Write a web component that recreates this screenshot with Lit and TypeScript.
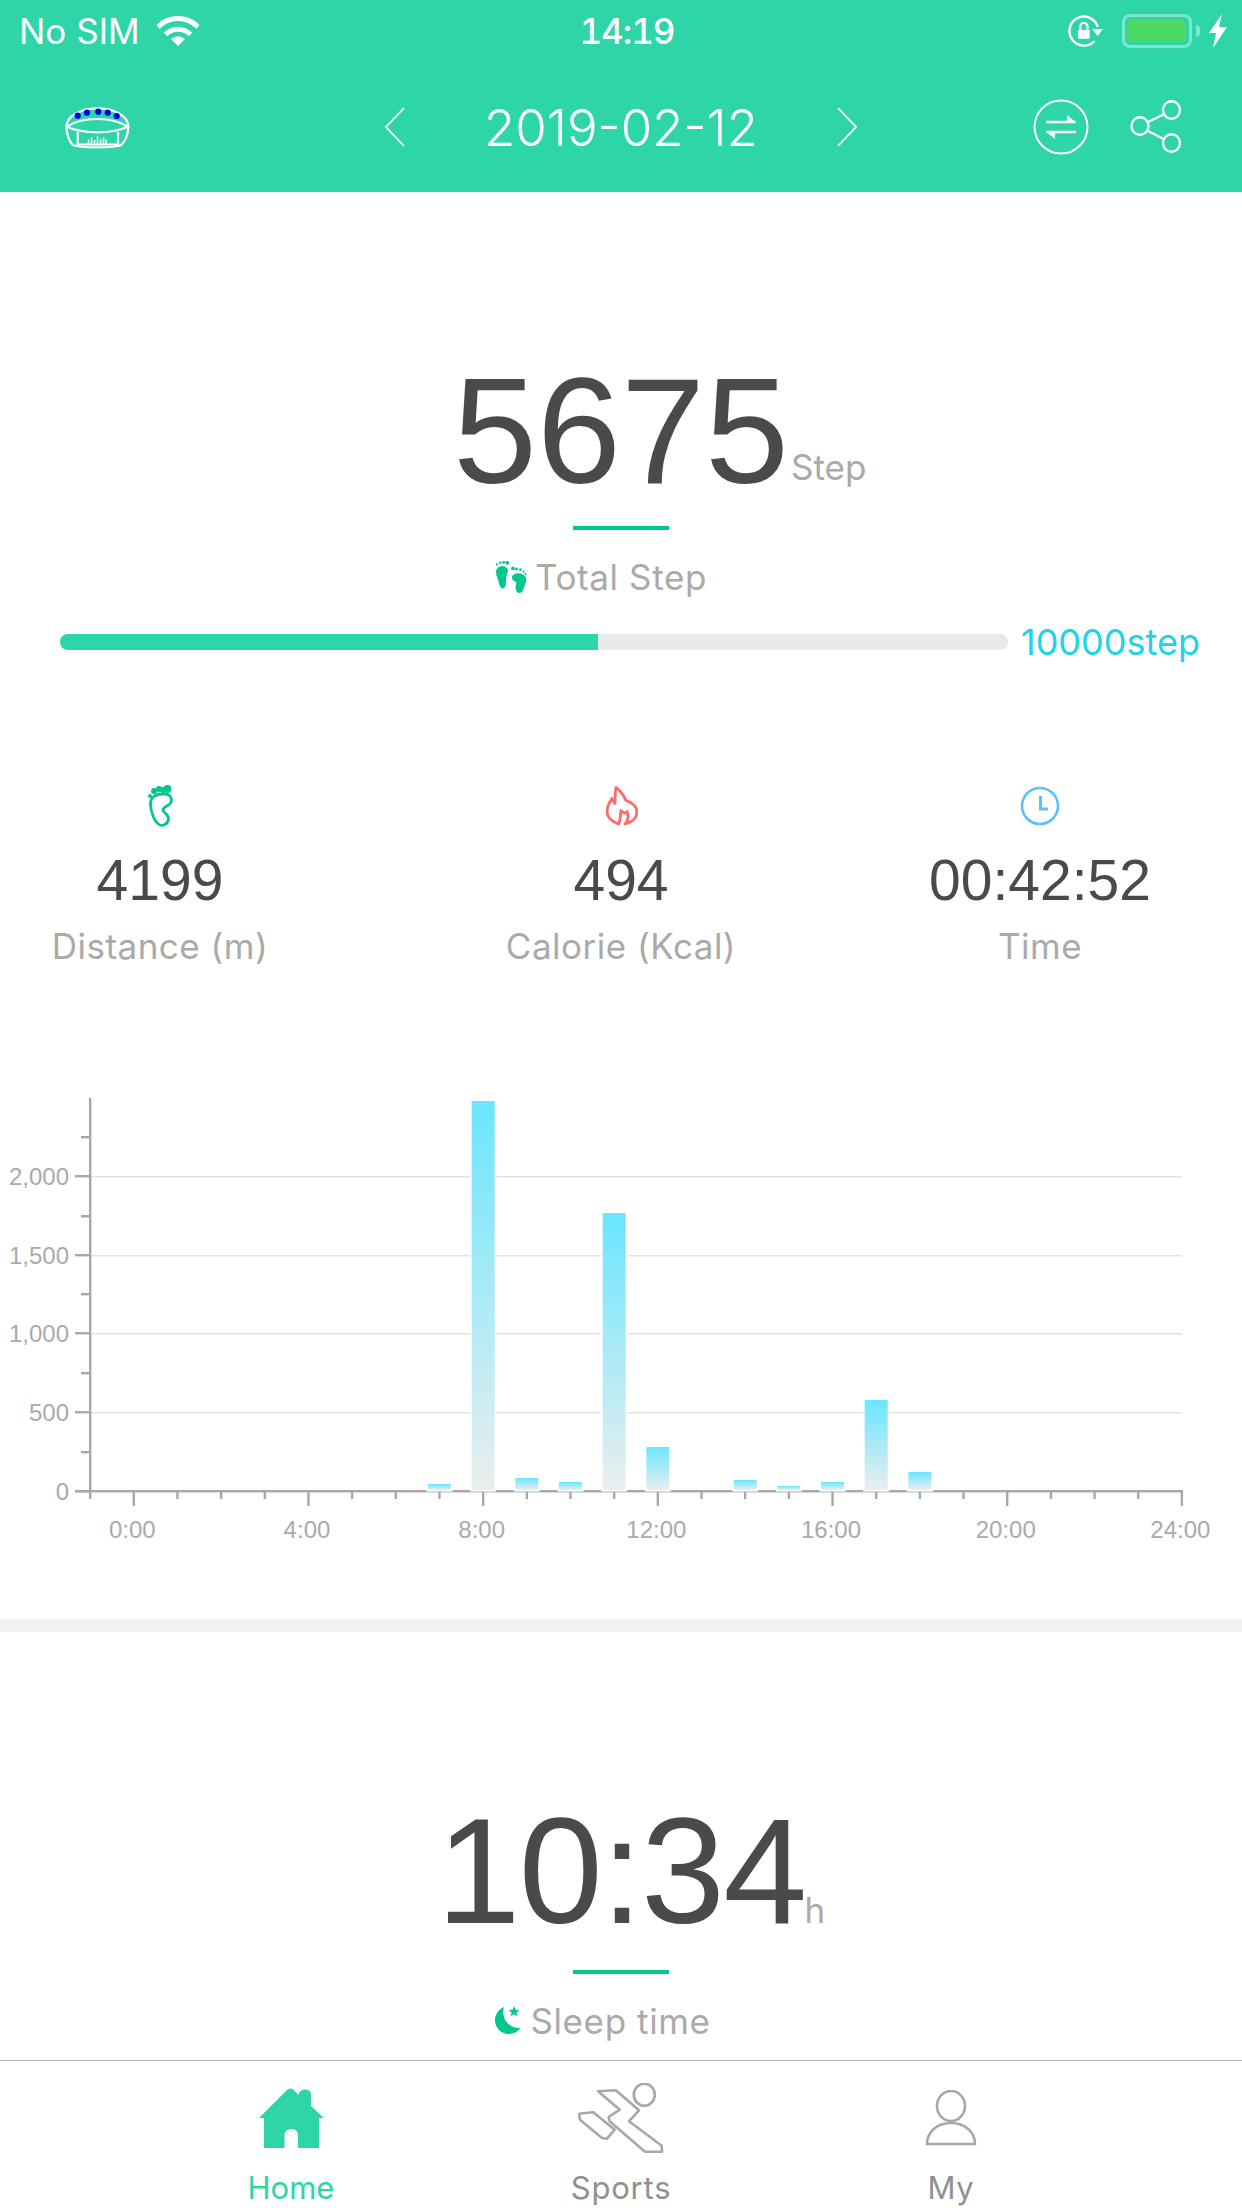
import { css, html, svg, LitElement } from 'lit'
import { customElement } from 'lit/decorators.js'

// hourly step counts, drawn as [hour, top y on the page]
const BARS = [
  [7, 1484], [8, 1101], [9, 1478], [10, 1482], [11, 1213], [12, 1447],
  [14, 1480], [15, 1486], [16, 1482], [17, 1400], [18, 1472],
]
const GRID = [
  [1176, '2,000'], [1255, '1,500'], [1333, '1,000'], [1412, '500'], [1491, '0'],
]
const Y_MINOR = [1137, 1216, 1294, 1373, 1452]
const hourX = (h: number) => 133.8 + h * 43.67

const chevron = (d: string) => html`<svg width="24" height="40" viewBox="0 0 24 40">
  <path d=${d} fill="none" stroke="#fff" stroke-width="1.8" /></svg>`

@customElement('app-root')
export class AppRoot extends LitElement {
  renderChart() {
    const hours = Array.from({ length: 25 }, (_, i) => i)
    return html`<svg class="chart" width="1242" height="460" viewBox="0 1090 1242 460">
      <defs>
        <linearGradient id="bar" x1="0" y1="0" x2="0" y2="1">
          <stop offset="0" stop-color="#6ae6ff" />
          <stop offset="1" stop-color="#eaeeee" />
        </linearGradient>
      </defs>
      ${GRID.slice(0, 4).map(([y]) => svg`<rect x="91" y=${y as number} width="1091" height="1.5" fill="#e3e3e3" />`)}
      <rect x="89" y="1098" width="2.4" height="394" fill="#a8a8a8" />
      <rect x="75" y="1490" width="1108" height="2.4" fill="#a8a8a8" />
      ${GRID.map(([y, t]) => svg`
        <rect x="75" y=${(y as number) - 1} width="15" height="2.4" fill="#a8a8a8" />
        <text x="69" y=${(y as number) + 8.5} text-anchor="end" class="tick">${t}</text>`)}
      ${Y_MINOR.map((y) => svg`<rect x="81" y=${y - 1} width="9" height="2.4" fill="#a8a8a8" />`)}
      <rect x="89" y="1491" width="2.4" height="8" fill="#a8a8a8" />
      ${hours.map((h) => {
        const major = h % 4 === 0
        return svg`<rect x=${hourX(h) - 1.2} y="1491" width="2.4" height=${major ? 15 : 8} fill="#a8a8a8" />
          ${major ? svg`<text x=${hourX(h) - 1.5} y="1537.5" text-anchor="middle" class="tick">${h}:00</text>` : ''}`
      })}
      ${BARS.map(([h, top]) => svg`<rect x=${hourX(h) - 11.5} y=${top} width="23" height=${1490 - top}
        fill="url(#bar)" stroke="#fff" stroke-width="3" paint-order="stroke" />`)}
    </svg>`
  }

  renderFeet() {
    return html`<svg width="31" height="33" viewBox="0 0 31 33" fill="#00c78c">
      <path d="M0 11 C0 5 8 3 11 7 C13.5 10 10 14 10 18 C10 22 10.5 27 7 27.5 C3 27.5 3 20 1.5 17 C0.5 15 0 13 0 11Z" />
      <path d="M16 17 C15.5 13 22 11 26 13 C30 15 31 18 30 21 C29 24 28 26 27 29 C26 33 21 33 20 29 C19 25 21 23 20 21 C19 20 16.5 20 16 17Z" />
      <circle cx="1" cy="3.4" r="1.1" /><circle cx="4.3" cy="1.8" r="1.3" /><circle cx="7.7" cy="1.4" r="1.4" />
      <circle cx="11.3" cy="1.8" r="1.9" />
      <circle cx="17" cy="7.4" r="1.9" /><circle cx="20.6" cy="8" r="1.4" /><circle cx="24.4" cy="8.6" r="1.3" />
      <circle cx="27.6" cy="10.6" r="1.1" /><circle cx="29.4" cy="13" r="1" />
    </svg>`
  }

  renderHero(value: string, unit: string, icon: unknown, label: string, mod = '') {
    return html`
      <div class="hero ${mod}">
        <span></span>
        <span class="hero_value">${value}</span>
        <span class="hero_unit">${unit}</span>
      </div>
      <div class="hero_rule ${mod}"></div>
      <div class="hero_label">${icon}<span>${label}</span></div>
    `
  }

  render() {
    return html`
      <header class="top">
        <div class="status">
          <div class="status_left">
            <span>No SIM</span>
            <svg width="42" height="30" viewBox="0 0 42 30">
              <path d="M1 11 A28 28 0 0 1 41 11" fill="none" stroke="#fff" stroke-width="5" />
              <path d="M8.5 18.5 A17.5 17.5 0 0 1 33.5 18.5" fill="none" stroke="#fff" stroke-width="5" />
              <path d="M21 30 L14 23 A10 10 0 0 1 28 23Z" fill="#fff" />
            </svg>
          </div>
          <span class="status_time">14:19</span>
          <div class="status_right">
            <svg width="36" height="32" viewBox="0 0 36 32">
              <path d="M29.8 12 A14.5 14.5 0 1 0 26.5 26" fill="none" stroke="#fff" stroke-width="2.4" />
              <path d="M24 14 H35 L29.7 21Z" fill="#fff" />
              <rect x="10" y="15" width="11.7" height="8.7" rx="1" fill="#fff" />
              <path d="M12.3 15 V11.5 A3.6 3.6 0 0 1 19.5 11.5 V15" fill="none" stroke="#fff" stroke-width="2.2" />
            </svg>
            <div class="battery"><div class="battery_fill"></div></div>
            <div class="battery_nub"></div>
            <svg width="18" height="34" viewBox="0 0 18 34">
              <path d="M13 0 L0 19 H7 L4 34 L18 13 H10Z" fill="#fff" />
            </svg>
          </div>
        </div>
        <nav class="nav">
          <svg width="65" height="43" viewBox="0 0 65 43" fill="none" stroke="#fff" stroke-width="2.2">
            <path d="M1.5 20.7 C1.5 10 16 2.3 32.5 2.3 C49 2.3 63.3 10 63.3 20.7 C63.3 28 60 37 55 39.5 C46 42 18 42 9 39.5 C4.5 37 1.5 28 1.5 20.7Z" />
            <path d="M2 20.7 C10 15 22 13 33 13 C44 13 54 15 63 20.7 C54 24.5 44 26.3 33 26.3 C22 26.3 10 24.5 2 20.7Z" />
            <path d="M12.7 26 V38.5 H53 V26" />
            <path d="M23.5 38 V33.5 M26.5 38 V31.5 M29.5 38 V34 M32.5 38 V30 M35.5 38 V33.5 M38.5 38 V31.5 M41 38 V33.5" stroke-width="1.5" />
            <g fill="#0000e6" stroke="none">
              <circle cx="12.7" cy="9.7" r="3.1" /><circle cx="22" cy="6.7" r="3.1" /><circle cx="33.3" cy="5.7" r="3.1" />
              <circle cx="42.7" cy="6.7" r="3.1" /><circle cx="51.7" cy="10" r="3.1" />
            </g>
          </svg>
          <div class="nav_date">
            ${chevron('M21 1 L3 20 L21 39')}
            <span>2019-02-12</span>
            ${chevron('M3 1 L21 20 L3 39')}
          </div>
          <div class="nav_actions">
            <svg width="56" height="56" viewBox="0 0 56 56" fill="none" stroke="#fff" stroke-width="2">
              <circle cx="28" cy="28" r="26.5" />
              <path d="M13 23 H42.5 M13.5 33 H43" stroke-width="2.6" />
              <path d="M34 16 L42.5 23 H34Z M13.5 33 H22 V40Z" fill="#fff" stroke="none" />
            </svg>
            <svg width="52" height="54" viewBox="0 0 52 54" fill="none" stroke="#fff" stroke-width="2.4">
              <ellipse cx="41.5" cy="10" rx="8.5" ry="8.8" />
              <ellipse cx="10" cy="26" rx="8.5" ry="8.8" />
              <ellipse cx="41.5" cy="43" rx="8.5" ry="8.8" />
              <path d="M18 22 L33.5 14.5 M18 31 L33.5 39" />
            </svg>
          </div>
        </nav>
      </header>

      <main class="main">
        ${this.renderHero('5675', 'Step', this.renderFeet(), 'Total Step')}

        <div class="goal">
          <div class="goal_track"><div class="goal_fill" style="width:${(5675 / 10000) * 100 - 0.05}%"></div></div>
          <span class="goal_text">10000step</span>
        </div>

        <section class="stats">
          <div class="stat">
            <svg width="26" height="42" viewBox="0 0 26 42">
              <path d="M3.5 20 C3 12 9 9 15 9 C22 8 25.5 12 24 17 C23 21 16 21 16 25 C16 28 22 29 21.5 34 C21 39 16 41 13 40 C8 38 4 28 3.5 20Z" fill="none" stroke="#00c78c" stroke-width="2.8" />
              <g fill="#00c78c">
                <circle cx="3" cy="11" r="2" /><circle cx="7" cy="6" r="3" /><circle cx="12" cy="4" r="3" />
                <circle cx="16" cy="5" r="3" /><circle cx="20.5" cy="4" r="4" />
              </g>
            </svg>
            <div class="stat_value">4199</div>
            <div class="stat_label">Distance (m)</div>
          </div>
          <div class="stat">
            <svg width="33" height="39" viewBox="0 0 33 39" fill="none" stroke="#ff6b6b" stroke-width="2.8" stroke-linejoin="round">
              <path d="M11 1 C17 5 19 10 21 14 C27 16 32 20 32 26 C32 32 26 36 20 37.5 C23 34 24 29 22 25 C20 28 18 26 16 24 C15 28 16 33 13.5 37.5 C7 35 2 31 2 25 C2 20 5 15 7 12 C8 15 9 16 10 17 C10 12 10 6 11 1Z" />
            </svg>
            <div class="stat_value">494</div>
            <div class="stat_label">Calorie (Kcal)</div>
          </div>
          <div class="stat">
            <svg width="40" height="40" viewBox="0 0 40 40" fill="none" stroke="#5bc0ff" stroke-width="2.6">
              <circle cx="20" cy="20" r="18" />
              <path d="M20.5 10 V23 H28" stroke-width="3" />
            </svg>
            <div class="stat_value">00:42:52</div>
            <div class="stat_label">Time</div>
          </div>
        </section>

        ${this.renderChart()}

        <div class="divider"></div>

        ${this.renderHero('10:34', 'h', html`<svg width="30" height="30" viewBox="0 0 30 30" fill="#00c78c">
          <path d="M12 1 A14 14 0 1 0 28.5 22 A16 16 0 0 1 12 1Z" />
          <path d="M22 0 L23.5 3.7 L27.5 3.9 L24.4 6.4 L25.4 10.2 L22 8.1 L18.6 10.2 L19.6 6.4 L16.5 3.9 L20.5 3.7Z" />
        </svg>`, 'Sleep time', 'sleep')}
      </main>

      <footer class="tabs">
        <div class="tab tab--on">
          <div class="tab_icon">
            <svg width="65" height="60" viewBox="0 0 65 60" fill="#2ed5a9">
              <path d="M0 30 L28 2 Q31.5 -1 35 2 L39.5 7 C40 0 51.5 0 52 6 V18 L65 30 H60 V60 H39 V47 C39 39 25.5 39 25.5 47 V60 H5 V30Z" />
            </svg>
          </div>
          <span>Home</span>
        </div>
        <div class="tab">
          <div class="tab_icon">
            <svg width="86" height="70" viewBox="0 0 86 70" fill="none" stroke="#a8a8a8" stroke-width="2.6" stroke-linejoin="round">
              <ellipse cx="66.3" cy="11.7" rx="10.5" ry="11" />
              <path d="M20 8.3 L37.8 7.3 L61 27.3 L51 38.3 L83.7 62.7 L84 68.7 L67 68.7 L31.6 38.3 L30.6 34 L41.8 26.7Z" />
              <path d="M1 30.7 L15.3 29.3 L36.7 46.7 L29 55.7 L24 55 L2 36.7Z" />
            </svg>
          </div>
          <span>Sports</span>
        </div>
        <div class="tab">
          <div class="tab_icon">
            <svg width="52" height="56" viewBox="0 0 52 56" fill="none" stroke="#a8a8a8" stroke-width="2.6">
              <ellipse cx="26" cy="16" rx="14" ry="15" />
              <path d="M2 54 C2 42 12 33 26 33 C40 33 50 42 50 54Z" />
            </svg>
          </div>
          <span>My</span>
        </div>
      </footer>
    `
  }

  static styles = css`
    :host {
      display: flex;
      flex-direction: column;
      height: 2208px;
      width: 1242px;
      overflow: hidden;
      background: #fff;
      font-family: Inter, 'Liberation Sans', sans-serif;
    }
    svg {
      display: block;
      flex: none;
    }

    .top {
      background: #2ed5a9;
      color: #fff;
      height: 192px;
      flex: none;
    }
    .status {
      display: grid;
      grid-template-columns: 1fr auto 1fr;
      align-items: center;
      height: 62px;
      padding: 0 15px 0 19px;
      font-size: 35px;
    }
    .status_left {
      display: flex;
      align-items: center;
      gap: 17px;
    }
    .status_time {
      font-weight: 500;
      font-feature-settings: 'tnum';
      letter-spacing: -1px;
      margin-left: 8px;
    }
    .status_right {
      display: flex;
      align-items: center;
      justify-content: flex-end;
    }
    .battery {
      box-sizing: border-box;
      width: 70px;
      height: 34px;
      margin-left: 18px;
      padding: 3px;
      border: 3px solid rgba(255, 255, 255, 0.38);
      border-radius: 8px;
    }
    .battery_fill {
      height: 100%;
      background: #4cd964;
      border-radius: 4px;
    }
    .battery_nub {
      width: 4px;
      height: 12px;
      margin: 0 9px 0 4px;
      background: rgba(255, 255, 255, 0.38);
      border-radius: 0 4px 4px 0;
    }
    .nav {
      display: grid;
      grid-template-columns: 1fr auto 1fr;
      align-items: center;
      height: 130px;
      padding: 0 60px 0 65px;
    }
    .nav_date {
      display: flex;
      align-items: center;
      gap: 77px;
      margin-right: 5px;
      font-size: 51px;
      font-weight: 300;
    }
    .nav_actions {
      display: flex;
      justify-content: flex-end;
      align-items: center;
      gap: 41px;
    }

    .main {
      flex: 1;
      min-height: 0;
      overflow: hidden;
    }
    .hero {
      display: grid;
      grid-template-columns: 1fr auto 1fr;
      align-items: end;
      padding-top: 163px;
      color: #4a4a4a;
    }
    .hero_value {
      font-family: 'Liberation Sans', sans-serif;
      font-size: 151px;
      line-height: 1;
    }
    .hero.sleep .hero_value {
      letter-spacing: -1.8px;
    }
    .hero_unit {
      margin: 0 0 21px 2px;
      font-size: 35px;
      line-height: 1;
      color: #aaa;
    }
    .hero.sleep .hero_unit {
      margin: 0 0 18px -1px;
    }
    .hero_rule {
      width: 96px;
      height: 4px;
      margin: 20px auto 0;
      background: #00c78c;
    }
    .hero_rule.sleep {
      margin-top: 24px;
    }
    .hero_label {
      display: flex;
      justify-content: center;
      align-items: center;
      gap: 8px;
      height: 40px;
      margin-top: 27px;
      padding-right: 39px;
      font-size: 35px;
      letter-spacing: 0.6px;
      color: #aaa;
    }

    .goal {
      display: flex;
      align-items: center;
      gap: 13px;
      height: 44px;
      margin-top: 23px;
      padding-left: 60px;
    }
    .goal_track {
      width: 948px;
      height: 16px;
      background: #e9e9e9;
      border-radius: 8px;
      overflow: hidden;
    }
    .goal_fill {
      height: 100%;
      background: #2ed5a9;
    }
    .goal_text {
      font-size: 36px;
      line-height: 42px;
      color: #22d3e6;
    }

    .stats {
      display: grid;
      grid-template-columns: 320px 602px 236px;
      margin-top: 120px;
    }
    .stat {
      display: flex;
      flex-direction: column;
      align-items: center;
    }
    .stat svg {
      height: 44px;
    }
    .stat_value {
      margin-top: 22px;
      font-family: 'Liberation Sans', sans-serif;
      font-size: 57px;
      line-height: 60px;
      color: #4a4a4a;
      white-space: nowrap;
    }
    .stat_label {
      margin-top: 16px;
      font-size: 35px;
      line-height: 40px;
      letter-spacing: 0.5px;
      color: #aaa;
      white-space: nowrap;
    }

    .chart {
      margin-top: 124px;
    }
    .tick {
      font-family: 'Liberation Sans', sans-serif;
      font-size: 24px;
      fill: #aaa;
    }
    .divider {
      height: 13px;
      margin-top: 69px;
      background: #f2f2f2;
    }

    .tabs {
      display: grid;
      grid-template-columns: repeat(3, 330px);
      flex: none;
      box-sizing: border-box;
      height: 148px;
      padding: 21px 126px 0;
      border-top: 1.4px solid #b4b4b4;
      background: #fff;
    }
    .tab {
      display: flex;
      flex-direction: column;
      align-items: center;
      font-size: 31px;
      line-height: 40px;
      letter-spacing: 0.8px;
      color: #909090;
    }
    .tab--on {
      color: #2ed5a9;
      letter-spacing: 0;
    }
    .tab_icon {
      display: flex;
      align-items: center;
      height: 72px;
      margin-bottom: 14px;
    }
  `
}
